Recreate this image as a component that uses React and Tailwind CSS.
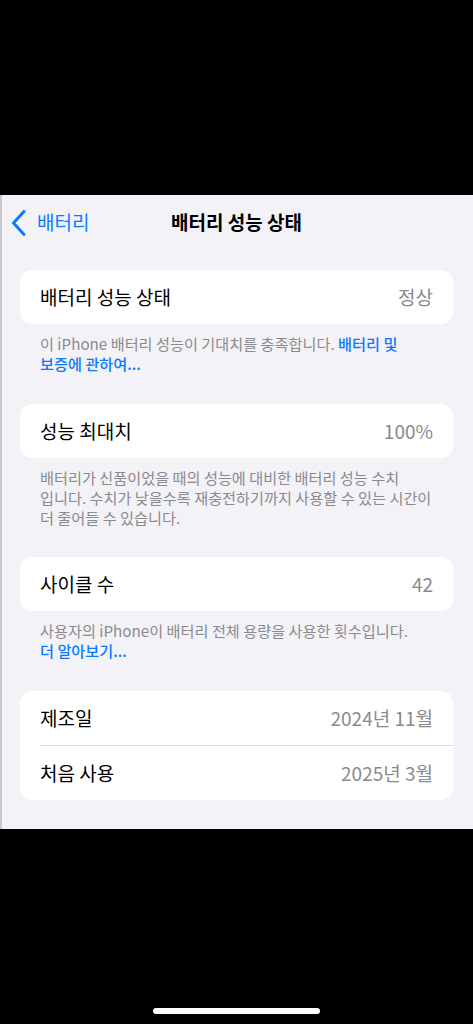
import React from "react";

const font = { fontFamily: '"Noto Sans CJK KR", "Noto Sans", sans-serif' };

function Row({ label, value }) {
  return (
    <div className="flex h-[54px] items-center justify-between px-[20px]">
      <span className="text-[19px] text-black">{label}</span>
      <span className="text-[19px] text-[#8a8a8e]">{value}</span>
    </div>
  );
}

function Footer({ children }) {
  return (
    <div className="whitespace-nowrap pl-[40px] pr-[10px] pt-[9px] text-[15.2px] leading-[20px] text-[#8a8a8e]">
      {children}
    </div>
  );
}

export default function App() {
  return (
    <div className="flex h-[1024px] w-[473px] flex-col bg-black" style={font}>
      <div className="h-[195px] shrink-0" />
      <div className="h-[634px] shrink-0 bg-[#f2f2f7] shadow-[inset_2px_0_0_#c7c7cc]">
        <div className="grid h-[55px] grid-cols-[1fr_auto_1fr] items-center">
          <div className="flex items-center gap-[10px] pl-[11px]">
            <svg width="16" height="26" viewBox="0 0 16 26" fill="none">
              <path d="M13 1.5 L2.5 13 L13 24.5" stroke="#0a7aff" strokeWidth="3" strokeLinecap="round" strokeLinejoin="round" />
            </svg>
            <span className="text-[19px] text-[#0a7aff]">배터리</span>
          </div>
          <div className="text-[19px] font-semibold text-black">배터리 성능 상태</div>
          <div />
        </div>

        <div className="mt-[20px]">
          <div className="mx-[20px] rounded-[12px] bg-white">
            <Row label="배터리 성능 상태" value="정상" />
          </div>
          <Footer>
            이 iPhone 배터리 성능이 기대치를 충족합니다. <span className="font-medium text-[#0a7aff]">배터리 및</span>
            <br />
            <span className="font-medium text-[#0a7aff]">보증에 관하여...</span>
          </Footer>
        </div>

        <div className="mt-[31px]">
          <div className="mx-[20px] rounded-[12px] bg-white">
            <Row label="성능 최대치" value="100%" />
          </div>
          <Footer>
            배터리가 신품이었을 때의 성능에 대비한 배터리 성능 수치
            <br />
            입니다. 수치가 낮을수록 재충전하기까지 사용할 수 있는 시간이
            <br />
            더 줄어들 수 있습니다.
          </Footer>
        </div>

        <div className="mt-[30px]">
          <div className="mx-[20px] rounded-[12px] bg-white">
            <Row label="사이클 수" value="42" />
          </div>
          <Footer>
            사용자의 iPhone이 배터리 전체 용량을 사용한 횟수입니다.
            <br />
            <span className="font-medium text-[#0a7aff]">더 알아보기...</span>
          </Footer>
        </div>

        <div className="mt-[31px]">
          <div className="mx-[20px] rounded-[12px] bg-white">
            <Row label="제조일" value="2024년 11월" />
            <div className="ml-[20px] h-px bg-[#dcdce0]" />
            <Row label="처음 사용" value="2025년 3월" />
          </div>
        </div>
      </div>
      <div className="flex flex-1 items-end justify-center pb-[10px]">
        <div className="h-[6px] w-[167px] rounded-full bg-white" />
      </div>
    </div>
  );
}
